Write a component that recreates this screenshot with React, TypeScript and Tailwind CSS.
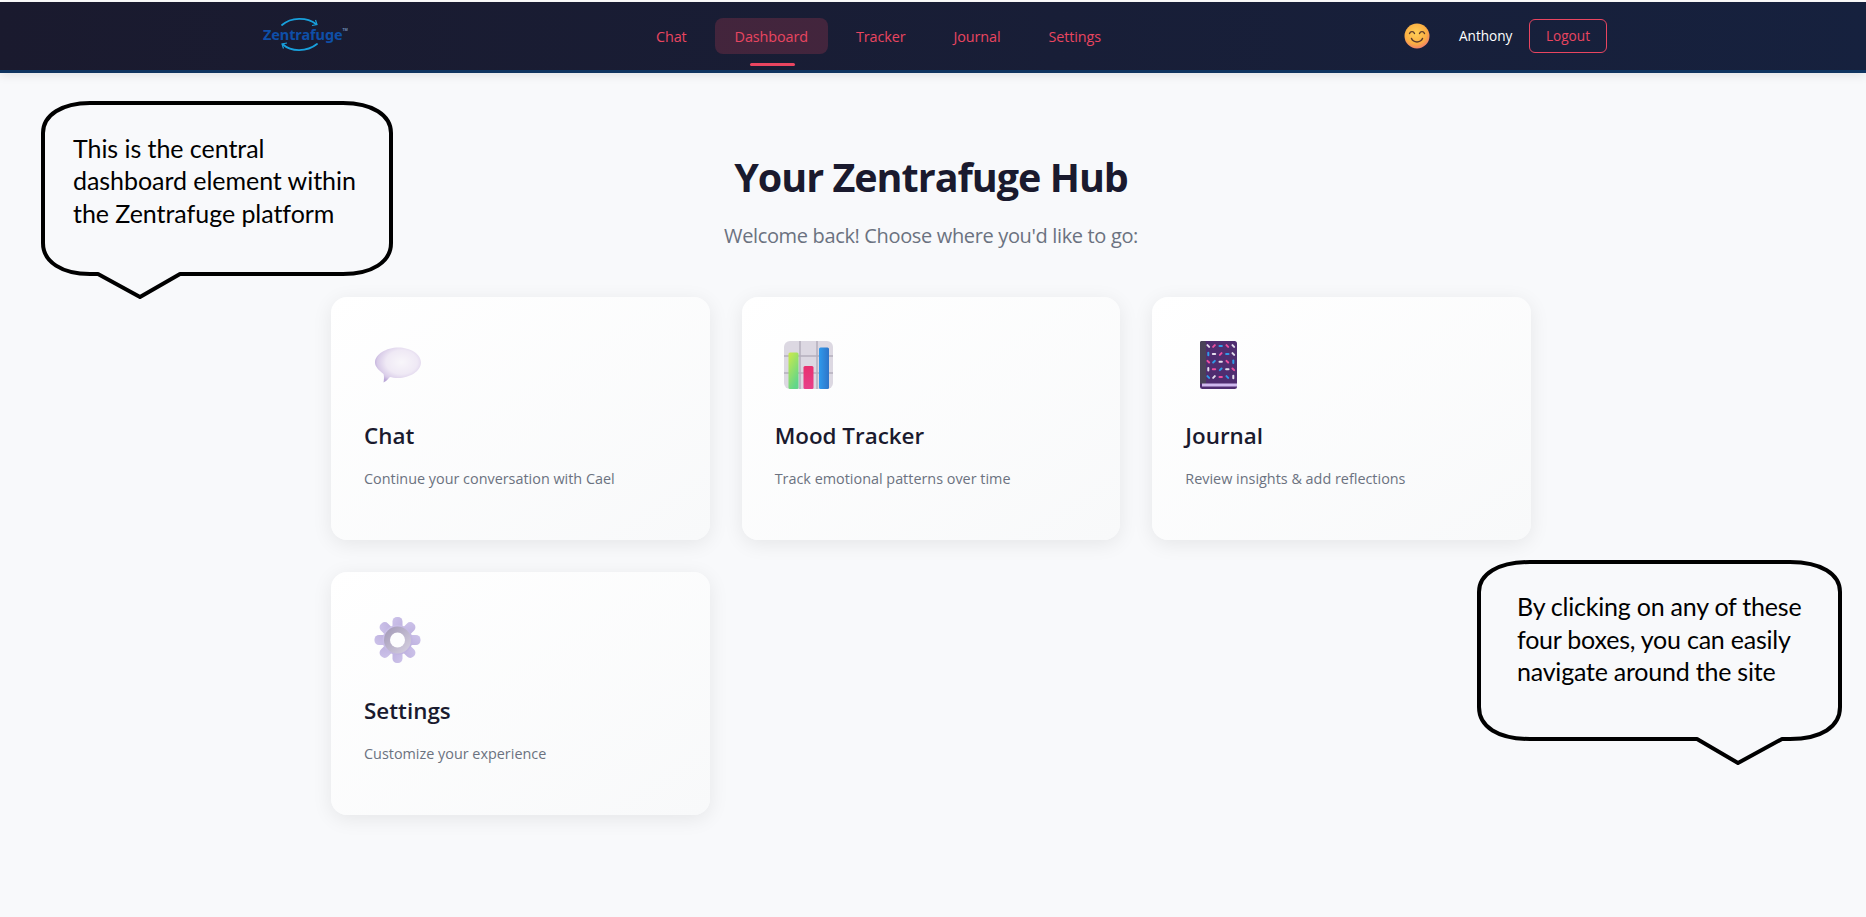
import React from "react";

const ui = "font-['Open_Sans','Noto_Sans',sans-serif]";
const callout = "font-['Lato','Open_Sans',sans-serif]";

function Logo() {
  return (
    <div className="relative w-[93px] h-[40px] flex items-center">
      <span className="ml-[3px] -mt-[3px] text-[#0e4fa8] text-[14.5px] leading-none font-bold font-['Noto_Sans',sans-serif] tracking-[-0.1px] whitespace-nowrap">
        Zentrafuge
      </span>
      <span className="text-[#6f8fb8] text-[3.5px] leading-none font-bold -mt-3 font-['Noto_Sans',sans-serif]">TM</span>
      <svg className="absolute left-0 top-0" width="93" height="40" viewBox="0 0 93 40" fill="none">
        <path d="M22 9 C31 1 47 1 56 8" stroke="#18a0dc" strokeWidth="1.8" strokeLinecap="round" />
        <path d="M52 9.5 L57 8.5 L55.5 4" stroke="#18a0dc" strokeWidth="1.2" />
        <path d="M57 28 C47 36 31 36 23 28.5" stroke="#18a0dc" strokeWidth="1.8" strokeLinecap="round" />
        <path d="M27 27 L22 28 L23.5 32.5" stroke="#18a0dc" strokeWidth="1.2" />
      </svg>
    </div>
  );
}

function Smile() {
  return (
    <svg width="26" height="26" viewBox="0 0 26 26">
      <defs>
        <radialGradient id="sm" cx="0.45" cy="0.38" r="0.72">
          <stop offset="0" stopColor="#ffcf58" />
          <stop offset="0.6" stopColor="#fbae42" />
          <stop offset="1" stopColor="#ec6a7c" />
        </radialGradient>
      </defs>
      <circle cx="13" cy="13" r="12.5" fill="url(#sm)" />
      <path d="M5.5 10.5 C6.5 8 9.5 8 10.5 10.5" stroke="#5b3a2c" strokeWidth="1.4" fill="none" strokeLinecap="round" />
      <path d="M15.5 10.5 C16.5 8 19.5 8 20.5 10.5" stroke="#5b3a2c" strokeWidth="1.4" fill="none" strokeLinecap="round" />
      <path d="M7.5 15.5 C9.5 20 16.5 20 18.5 15.5" stroke="#5b3a2c" strokeWidth="1.5" fill="none" strokeLinecap="round" />
    </svg>
  );
}

function ChatIcon() {
  return (
    <svg width="46" height="36" viewBox="0 0 46 36">
      <defs>
        <radialGradient id="chatg" cx="0.58" cy="0.42" r="0.62">
          <stop offset="0" stopColor="#f8f6fa" />
          <stop offset="0.55" stopColor="#efe9f5" />
          <stop offset="0.85" stopColor="#d8cbe8" />
          <stop offset="1" stopColor="#bba8d8" />
        </radialGradient>
      </defs>
      <path
        d="M23.5 0.5 C35 0.5 46 7 46 15.5 C46 24 35 31 23 31 C19.5 31 17 30.5 15 30 C13 32 11 34.5 8.5 35.5 C9 32.5 9.3 29.5 8.5 27 C3.5 23 0 19.5 0 15.5 C0 7.5 11 0.5 23.5 0.5 Z"
        fill="url(#chatg)"
      />
    </svg>
  );
}

function ChartIcon() {
  return (
    <svg width="49" height="48" viewBox="0 0 49 48">
      <defs>
        <linearGradient id="gb" x1="0" x2="0.5" y1="0" y2="1">
          <stop offset="0" stopColor="#cdea4a" />
          <stop offset="1" stopColor="#62d68a" />
        </linearGradient>
        <linearGradient id="pb" x1="0" x2="0" y1="0" y2="1">
          <stop offset="0" stopColor="#e8306f" />
          <stop offset="1" stopColor="#e73f8a" />
        </linearGradient>
        <linearGradient id="bb" x1="0" x2="1" y1="0" y2="0">
          <stop offset="0" stopColor="#2f9aec" />
          <stop offset="1" stopColor="#2e74c8" />
        </linearGradient>
      </defs>
      <rect x="0" y="0" width="49" height="48" rx="6" fill="#dcd8e2" />
      <path d="M16 0 V48 M33 0 V48 M0 15 H49 M0 32 H49" stroke="#b4afbd" strokeWidth="1.5" />
      <rect x="4.5" y="11.5" width="10" height="36.5" rx="1.5" fill="url(#gb)" />
      <rect x="19.5" y="25" width="10" height="23" rx="1.5" fill="url(#pb)" />
      <rect x="35" y="6.5" width="10" height="41.5" rx="1.5" fill="url(#bb)" />
    </svg>
  );
}

const W = "#e4deec";
const P = "#ec4f9e";
const B = "#2f9be8";
const bookMarks: [string, number][][] = [
  [[W, 45], [P, -45], [B, 0], [P, 45], [W, 45]],
  [[B, 90], [W, 0], [P, -45], [B, 0], [W, 45]],
  [[P, 45], [B, -45], [W, 0], [P, 45], [B, 90]],
  [[W, 90], [P, 0], [B, -45], [W, 0], [P, 45]],
  [[B, 45], [W, -45], [P, 0], [B, 45], [W, 90]],
];
const bookX = [8.3, 14, 20.7, 27.3, 33.3];
const bookY = [5, 13, 20.7, 28.3, 36];

function BookIcon() {
  return (
    <svg width="37" height="48" viewBox="0 0 37 48">
      <rect x="0" y="0" width="37" height="48" rx="2.5" fill="#4f2d70" />
      <rect x="0" y="0" width="6" height="43" rx="1.5" fill="#4a4358" />
      <rect x="2" y="42.5" width="35" height="3" fill="#cfb9ee" />
      {bookMarks.map((row, r) =>
        row.map(([color, angle], c) => (
          <rect
            key={`${r}-${c}`}
            x={bookX[c] - 2.2}
            y={bookY[r] - 1}
            width="4.4"
            height="2"
            rx="1"
            fill={color}
            transform={`rotate(${angle} ${bookX[c]} ${bookY[r]})`}
          />
        ))
      )}
    </svg>
  );
}

function GearIcon() {
  const teeth = [0, 45, 90, 135, 180, 225, 270, 315];
  return (
    <svg width="47" height="46" viewBox="0 0 47 46">
      <defs>
        <linearGradient id="gear" x1="0" x2="1" y1="0" y2="1">
          <stop offset="0" stopColor="#cdc3ea" />
          <stop offset="1" stopColor="#bdb0de" />
        </linearGradient>
        <linearGradient id="gearring" x1="0" x2="1" y1="0" y2="1">
          <stop offset="0" stopColor="#a097b5" />
          <stop offset="1" stopColor="#d8d2e2" />
        </linearGradient>
      </defs>
      {teeth.map((a) => (
        <rect key={a} x="18.5" y="0" width="10" height="14" rx="4.5" fill="url(#gear)" transform={`rotate(${a} 23.5 23)`} />
      ))}
      <circle cx="23.5" cy="23" r="15" fill="url(#gear)" />
      <circle cx="23.5" cy="23" r="13.5" fill="url(#gearring)" />
      <circle cx="23.5" cy="23" r="7.5" fill="#fdfdfe" />
    </svg>
  );
}

function Card({ icon, title, text, iconClass }: { icon: React.ReactNode; title: string; text: string; iconClass: string }) {
  return (
    <div className="h-[243px] rounded-2xl bg-gradient-to-br from-white to-[#f8f9fa] shadow-[0_4px_20px_rgba(0,0,0,0.08)] px-[33px] pt-[44px]">
      <div className={`h-[48px] flex items-center ${iconClass}`}>{icon}</div>
      <h3 className="mt-[32px] text-[22.4px] leading-[30px] font-semibold text-[#1a1a2e]">{title}</h3>
      <p className="mt-[17px] text-[14.4px] leading-[22px] text-[#6b7280]">{text}</p>
    </div>
  );
}

function NavLink({ label, active }: { label: string; active?: boolean }) {
  return (
    <a
      className={`relative h-[36px] px-5 pt-[1px] flex items-center rounded-lg text-[14.4px] tracking-[-0.1px] text-[#e94560] ${
        active ? "bg-[rgba(233,69,96,0.2)]" : ""
      }`}
    >
      {label}
      {active ? <span className="absolute left-[35px] bottom-[-12px] w-[45px] h-[3px] rounded-sm bg-[#e94560]" /> : null}
    </a>
  );
}

export default function App() {
  return (
    <div className={`relative h-[917px] overflow-hidden bg-[#f8f9fb] ${ui}`}>
      <div className="h-[2px] bg-white" />
      <header className="h-[71px] bg-gradient-to-r from-[#1a1a2e] to-[#16213e] border-b-[3px] border-[#0f3460] shadow-[0_2px_10px_rgba(0,0,0,0.1)] flex items-center pl-[260px]">
        <div className="w-[1347px] flex items-center justify-between">
          <Logo />
          <nav className="flex items-center gap-2">
            <NavLink label="Chat" />
            <NavLink label="Dashboard" active />
            <NavLink label="Tracker" />
            <NavLink label="Journal" />
            <NavLink label="Settings" />
          </nav>
          <div className="flex items-center w-[203px]">
            <Smile />
            <span className="ml-[29px] text-[13.6px] text-white">Anthony</span>
            <button className="ml-auto h-[34px] w-[78px] rounded-md border border-[#e94560] text-[13.6px] text-[#e94560]">
              Logout
            </button>
          </div>
        </div>
      </header>

      <main className="w-[1200px] ml-[331px]">
        <h1 className="mt-[75px] text-center text-[39.5px] leading-[58px] font-bold text-[#1a1a2e] tracking-[-1px]">
          Your Zentrafuge Hub
        </h1>
        <p className="mt-[16px] text-center text-[20px] leading-[28px] text-[#6b7280] tracking-[-0.35px]">
          Welcome back! Choose where you'd like to go:
        </p>
        <div className="mt-[47px] grid grid-cols-3 gap-8">
          <Card icon={<ChatIcon />} title="Chat" text="Continue your conversation with Cael" iconClass="pl-[11px]" />
          <Card icon={<ChartIcon />} title="Mood Tracker" text="Track emotional patterns over time" iconClass="pl-[9px]" />
          <Card icon={<BookIcon />} title="Journal" text="Review insights & add reflections" iconClass="pl-[15px]" />
          <Card icon={<GearIcon />} title="Settings" text="Customize your experience" iconClass="pl-[10px]" />
        </div>
      </main>

      <div className="absolute left-[41px] top-[101px] w-[352px] h-[198px]">
        <svg className="absolute inset-0" width="352" height="198" viewBox="41 101 352 198" fill="none">
          <path
            d="M90 103 H343 C372 103 391 115 391 133 V243 C391 262 372 274 343 274 H180 L140 297 L98 274 H90 C62 274 43 262 43 243 V133 C43 115 62 103 90 103 Z"
            stroke="#000"
            strokeWidth="4"
            strokeLinejoin="round"
          />
        </svg>
        <p className={`absolute left-[32px] top-[30.5px] w-[290px] text-[25px] tracking-[-0.05px] leading-[32.5px] text-black ${callout}`}>
          This is the central
          <br />
          dashboard element within
          <br />
          the Zentrafuge platform
        </p>
      </div>

      <div className="absolute left-[1477px] top-[560px] w-[365px] h-[205px]">
        <svg className="absolute inset-0" width="365" height="205" viewBox="1477 560 365 205" fill="none">
          <path
            d="M1530 562 H1790 C1821 562 1840 574 1840 592 V707 C1840 727 1821 739 1790 739 H1782 L1738 763 L1697 739 H1530 C1498 739 1479 727 1479 707 V592 C1479 574 1498 562 1530 562 Z"
            stroke="#000"
            strokeWidth="4"
            strokeLinejoin="round"
          />
        </svg>
        <p className={`absolute left-[40px] top-[30px] w-[300px] text-[25px] tracking-[-0.22px] leading-[32.5px] text-black ${callout}`}>
          By clicking on any of these
          <br />
          four boxes, you can easily
          <br />
          navigate around the site
        </p>
      </div>
    </div>
  );
}
